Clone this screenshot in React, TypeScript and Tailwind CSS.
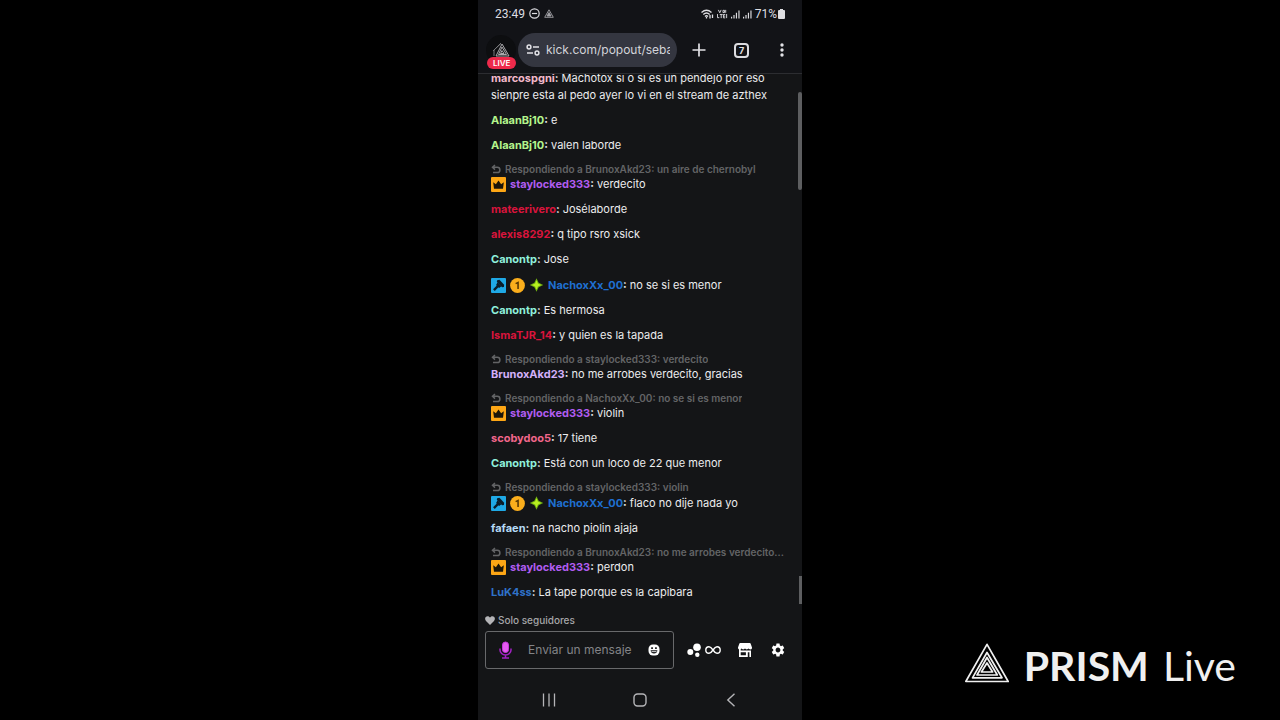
import type { ReactNode } from "react";
import { MdSettings } from "react-icons/md";

type Badge = "crown" | "mod" | "rank" | "spark";

interface ChatMessage {
  user: string;
  color: string;
  text: string;
  replyTo?: string;
  badges?: Badge[];
}

const messages: ChatMessage[] = [
  { user: "marcospgni", color: "text-[#f3b9cb]", text: "Machotox si o si es un pendejo por eso sienpre esta al pedo ayer lo vi en el stream de azthex" },
  { user: "AlaanBj10", color: "text-[#b4f58c]", text: "e" },
  { user: "AlaanBj10", color: "text-[#b4f58c]", text: "valen laborde" },
  { user: "staylocked333", color: "text-[#b05cf0]", text: "verdecito", replyTo: "BrunoxAkd23: un aire de chernobyl", badges: ["crown"] },
  { user: "mateerivero", color: "text-[#d8143c]", text: "Josélaborde" },
  { user: "alexis8292", color: "text-[#d8143c]", text: "q tipo rsro xsick" },
  { user: "Canontp", color: "text-[#8ff0dc]", text: "Jose" },
  { user: "NachoxXx_00", color: "text-[#1f6fd0]", text: "no se si es menor", badges: ["mod", "rank", "spark"] },
  { user: "Canontp", color: "text-[#8ff0dc]", text: "Es hermosa" },
  { user: "IsmaTJR_14", color: "text-[#d8143c]", text: "y quien es la tapada" },
  { user: "BrunoxAkd23", color: "text-[#d3b0fa]", text: "no me arrobes verdecito, gracias", replyTo: "staylocked333: verdecito" },
  { user: "staylocked333", color: "text-[#b05cf0]", text: "violin", replyTo: "NachoxXx_00: no se si es menor", badges: ["crown"] },
  { user: "scobydoo5", color: "text-[#f2668b]", text: "17 tiene" },
  { user: "Canontp", color: "text-[#8ff0dc]", text: "Está con un loco de 22 que menor" },
  { user: "NachoxXx_00", color: "text-[#1f6fd0]", text: "flaco no dije nada yo", replyTo: "staylocked333: violin", badges: ["mod", "rank", "spark"] },
  { user: "fafaen", color: "text-[#b5daf6]", text: "na nacho piolin ajaja" },
  { user: "staylocked333", color: "text-[#b05cf0]", text: "perdon", replyTo: "BrunoxAkd23: no me arrobes verdecito...", badges: ["crown"] },
  { user: "LuK4ss", color: "text-[#2f72c9]", text: "La tape porque es la capibara" },
];

function PrismMark({ className }: { className: string }) {
  return (
    <svg viewBox="0 0 44 40" className={className} fill="none" stroke="currentColor" strokeWidth="1.7" strokeLinejoin="round" aria-hidden="true">
      <path d="M22 1.3 43.2 38.500H.8Z" />
      <path d="M22 9.500 37 34.800H7.500Z" />
      <path d="M22 14.500 32.300 32 12 32Z" />
      <path d="M22 20 27.600 29H16.400Z" />
    </svg>
  );
}

function CrownBadge() {
  return (
    <svg viewBox="0 0 16 16" className="size-[15px] shrink-0" aria-hidden="true">
      <rect width="16" height="16" rx="1" fill="#fda615" />
      <path d="M2.300 5.600 5.200 7.600 8 3.600l2.800 4 2.900-2-.9 6.900H3.200Z" fill="#1c1508" />
    </svg>
  );
}

function ModBadge() {
  return (
    <svg viewBox="0 0 16 16" className="size-[15px] shrink-0" aria-hidden="true">
      <rect width="16" height="16" rx="1" fill="#1fa9e6" />
      <g fill="#0b1d29">
        <path d="M6.500 2.300 9 1.800l5 5.400-.2 2.300-2 .3-5.600-5.800Z" />
        <path d="M7 4.500 11.200 8.800 8.600 10.600 5.400 7.400Z" />
        <path d="M7 7.300 8.700 9 4 13.800 2.200 12Z" />
      </g>
    </svg>
  );
}

function RankBadge() {
  return (
    <svg viewBox="0 0 16 16" className="size-[15px] shrink-0" aria-hidden="true">
      <circle cx="8" cy="8" r="7.900" fill="#fbae1c" />
      <path d="M6 6 8.600 4.800V11.800" fill="none" stroke="#5b3a05" strokeWidth="1.700" />
    </svg>
  );
}

function SparkBadge() {
  return (
    <svg viewBox="0 0 16 16" className="h-[18px] w-[15px] shrink-0" aria-hidden="true">
      <path d="M8 .8 10.300 5.700 15.200 8 10.300 10.300 8 15.200 5.700 10.300.8 8 5.700 5.700Z" fill="#6fae12" />
      <path d="M8 3 9.500 6.500 13 8 9.500 9.500 8 13 6.500 9.500 3 8 6.500 6.500Z" fill="#b9f020" />
    </svg>
  );
}

const badgeIcons: Record<Badge, () => ReactNode> = {
  crown: CrownBadge,
  mod: ModBadge,
  rank: RankBadge,
  spark: SparkBadge,
};

function ReplyIcon() {
  return (
    <svg viewBox="0 0 10 10" className="size-[10px] shrink-0" fill="none" stroke="currentColor" strokeWidth="1.500" aria-hidden="true">
      <path d="M4 1 1.500 3.300 4 5.600M1.700 3.300H6.300A2.400 2.400 0 0 1 6.300 8.500H2" />
    </svg>
  );
}

function Message({ message }: { message: ChatMessage }) {
  return (
    <li>
      {message.replyTo && (
        <p className="flex h-[14px] items-center gap-1 text-[10px] leading-[14px] font-semibold text-[#636466]">
          <ReplyIcon />
          <span className="truncate">Respondiendo a {message.replyTo}</span>
        </p>
      )}
      <div className="flex items-center gap-1">
        {message.badges?.map((badge) => {
          const Icon = badgeIcons[badge];
          return <Icon key={badge} />;
        })}
        <p className="text-[11px] leading-[17px] text-[#ececee]">
          <span className={`font-bold ${message.color}`}>{message.user}</span>
          <span className="font-bold">:</span> {message.text}
        </p>
      </div>
    </li>
  );
}

function Signal() {
  return (
    <svg viewBox="0 0 10 10" className="h-[10px] w-[9px]" fill="currentColor" aria-hidden="true">
      <path d="M0 8h1.300v2H0ZM2.700 6H4v4H2.700ZM5.400 3.500h1.300V10H5.400ZM8.200 1h1.300v9H8.200Z" />
    </svg>
  );
}

function StatusBar() {
  return (
    <div className="flex h-[27px] items-center justify-between pr-[17px] pl-[17px] text-[12px] text-[#dedee2]">
      <div className="flex items-center gap-1">
        <time>23:49</time>
        <svg viewBox="0 0 12 12" className="size-[11px]" fill="none" stroke="currentColor" strokeWidth="1.300" aria-hidden="true">
          <circle cx="6" cy="6" r="5.100" />
          <path d="M3.200 6h5.600" />
        </svg>
        <svg viewBox="0 0 10 9" className="h-[9px] w-[10px] text-[#a4a4a8]" fill="none" stroke="currentColor" strokeWidth=".9" aria-hidden="true">
          <path d="M5 .8 9.300 8.300H.7Z" />
          <path d="M5 3.500 7 7H3Z" fill="currentColor" />
        </svg>
      </div>
      <div className="flex items-center gap-[3px]">
        <svg viewBox="0 0 13 10" className="h-[10px] w-[13px]" fill="none" stroke="currentColor" strokeWidth="1.300" aria-hidden="true">
          <path d="M.5 3.500Q5.500-1 10.500 3.500M2.300 5.500Q5.500 2.500 8.700 5.500M4 7.400Q5.500 6 7 7.400" />
          <path d="M5.500 8v1.500M9 6v3.500M11.500 5.500V9" />
        </svg>
        <svg viewBox="0 0 12 10" className="h-[10px] w-[11px]" fill="none" stroke="currentColor" strokeWidth="1" aria-hidden="true">
          <path d="M1.500.5 3 3.700 4.500.5M6.500 1h1.700v2.400H6.500ZM9.500.5v3.200M.5 5v4h2M3 5.500h3.200M4.600 5.500V9.500M9 5.500H7V9.200H9M7 7.300h2M10.500 5v4.500" />
        </svg>
        <Signal />
        <Signal />
        <span className="flex items-center gap-px">
          71%
          <svg viewBox="0 0 7 10" className="h-[10px] w-[7px]" fill="currentColor" aria-hidden="true">
            <path d="M2 0h3v1h1a1 1 0 0 1 1 1v7a1 1 0 0 1-1 1H1a1 1 0 0 1-1-1V2a1 1 0 0 1 1-1h1Z" />
          </svg>
        </span>
      </div>
    </div>
  );
}

function BrowserBar() {
  return (
    <div className="flex h-[47px] items-center border-b border-[#2c2d31] pr-[2px] pl-2 text-[#e2e2e6]">
      <button type="button" aria-label="LIVE" className="relative flex size-[30px] items-center justify-center rounded-full bg-[#0d0e10]">
        <svg viewBox="0 0 18 16" className="h-4 w-[18px] text-[#aaa9ac]" fill="none" stroke="currentColor" strokeWidth="1" aria-hidden="true">
          <path d="M2 14V8L9 1.500" stroke="#77777a" />
          <path d="M1 9 9 1" stroke="#77777a" />
          <path d="M10 2 17 14H4Z" />
          <path d="M10 5 14.500 12.500H6.500Z" />
          <path d="M10 8.500 12 11.500H8.500Z" />
        </svg>
        <span className="absolute top-[22px] left-px rounded-full bg-[#ee2a4b] px-[6px] text-[8px] leading-3 font-semibold text-white">LIVE</span>
      </button>
      <label className="ml-[2px] flex h-[34px] min-w-0 flex-1 items-center gap-[6px] rounded-full bg-[#343640] pr-[7px] pl-2">
        <svg viewBox="0 0 14 12" className="h-3 w-[14px] shrink-0" fill="none" stroke="currentColor" strokeWidth="1.500" aria-hidden="true">
          <circle cx="3" cy="3" r="1.900" />
          <path d="M7 3h6M1 9h6" />
          <circle cx="11" cy="9" r="1.900" />
        </svg>
        <input aria-label="URL" readOnly value="kick.com/popout/sebas" className="w-full min-w-0 bg-transparent text-[12px] text-[#d3d4da] outline-none" />
      </label>
      <button type="button" aria-label="+" className="flex h-8 w-[43px] items-center justify-center">
        <svg viewBox="0 0 14 14" className="size-[14px]" stroke="currentColor" strokeWidth="1.700" aria-hidden="true">
          <path d="M7 .5v13M.5 7h13" />
        </svg>
      </button>
      <button type="button" className="flex h-8 w-[43px] items-center justify-center">
        <span className="flex size-[15px] items-center justify-center rounded-[4px] border-2 border-[#dcdce0] text-[9px] leading-none font-bold">7</span>
      </button>
      <button type="button" aria-label="Menu" className="flex h-8 w-[37px] items-center justify-center">
        <svg viewBox="0 0 4 14" className="h-[14px] w-1" fill="currentColor" aria-hidden="true">
          <circle cx="2" cy="2" r="1.700" />
          <circle cx="2" cy="7" r="1.700" />
          <circle cx="2" cy="12" r="1.700" />
        </svg>
      </button>
    </div>
  );
}

function Composer() {
  return (
    <form className="px-[7px] pb-[11px]">
      <p className="flex h-4 items-center gap-[3px] text-[10px] font-medium text-[#a6a6a9]">
        <svg viewBox="0 0 10 9" className="h-[9px] w-[10px]" fill="#b4b4b7" aria-hidden="true">
          <path d="M5 9 1 5C-.8 2.800.3.300 2.600.2 3.800.2 4.600.9 5 1.600 5.400.9 6.200.2 7.400.2 9.700.3 10.800 2.800 9 5Z" />
        </svg>
        Solo seguidores
      </p>
      <div className="mt-[3px] flex items-center">
        <div className="flex h-[38px] min-w-0 flex-1 items-center rounded-[3px] border border-[#68696b] px-[13px]">
          <button type="button" aria-label="Mic" className="shrink-0">
            <svg viewBox="0 0 13 18" className="h-[18px] w-[13px]" fill="none" stroke="#a321c4" strokeWidth="1.500" aria-hidden="true">
              <rect x="3.500" y="1" width="6" height="10.500" rx="3" fill="#e65bf2" stroke="#c737dc" strokeWidth="1" />
              <path d="M1 7.500v1.500a5.500 5 0 0 0 11 0V7.500M6.500 14v2.500M3 17h7" />
            </svg>
          </button>
          <input type="text" aria-label="Enviar un mensaje" placeholder="Enviar un mensaje" className="ml-4 w-full min-w-0 bg-transparent text-[12px] text-white outline-none placeholder:text-[#838487]" />
          <button type="button" aria-label="Emoji" className="shrink-0">
            <svg viewBox="0 0 12 12" className="size-3" aria-hidden="true">
              <rect x=".5" y=".5" width="11" height="11" rx="4.500" fill="#fff" />
              <path d="M3.200 3.300h1.700v1.600H3.200ZM7.100 3.300h1.700v1.600H7.100ZM2.600 6.300h6.800Q9 9.600 6 9.600T2.600 6.300Z" fill="#141517" />
              <path d="M3.500 7.600h5" stroke="#fff" strokeWidth=".8" />
            </svg>
          </button>
        </div>
        <div className="ml-[13px] flex items-center text-white">
          <button type="button" aria-label="Points" className="flex items-center gap-[3px]">
            <svg viewBox="0 0 15 14" className="h-[14px] w-[15px]" fill="currentColor" aria-hidden="true">
              <circle cx="3.300" cy="9" r="3" />
              <circle cx="10" cy="4.200" r="3.800" />
              <circle cx="10.300" cy="11.700" r="2.200" />
            </svg>
            <svg viewBox="0 0 16 10" className="h-[10px] w-4" fill="none" stroke="currentColor" strokeWidth="1.400" aria-hidden="true">
              <path d="M8 5C6.700 3 5.700 1.700 4 1.700a3.200 3.300 0 0 0 0 6.600C5.700 8.300 6.700 7 8 5S10.300 1.700 12 1.700a3.200 3.300 0 0 1 0 6.600C10.300 8.300 9.300 7 8 5Z" />
            </svg>
          </button>
          <button type="button" aria-label="Store" className="ml-[17px]">
            <svg viewBox="0 0 14 14" className="size-[14px]" fill="currentColor" aria-hidden="true">
              <path d="M2.200 0h9.600q.6 0 .8.600L14 4.600v.6Q13.600 6.400 12.200 6.400 11 6.400 10.500 5.600 10 6.400 8.800 6.400 7.600 6.400 7 5.600 6.400 6.400 5.200 6.400 4 6.400 3.500 5.600 3 6.400 1.800 6.400.4 6.400 0 5.200V4.600L1.400.6Q1.600 0 2.200 0Z" />
              <path d="M1 6h1.700v1.600H13V14h-1.600V9.300h-1.600V14H1ZM2.700 9.200v3.100h5.200V9.200Z" fillRule="evenodd" />
            </svg>
          </button>
          <button type="button" aria-label="Settings" className="mr-[9px] ml-[18px]">
            <MdSettings className="size-4" />
          </button>
        </div>
      </div>
    </form>
  );
}

function NavigationBar() {
  return (
    <nav className="flex h-10 items-center justify-around px-[25px] text-[#b5b5b8]">
      <button type="button" aria-label="Recents">
        <svg viewBox="0 0 14 14" className="size-[14px]" stroke="currentColor" strokeWidth="1.300" aria-hidden="true">
          <path d="M1.500.5v13M7 .5v13M12.500.5v13" />
        </svg>
      </button>
      <button type="button" aria-label="Home">
        <svg viewBox="0 0 14 14" className="size-[14px]" fill="none" stroke="currentColor" strokeWidth="1.400" aria-hidden="true">
          <rect x="1" y="1" width="12" height="12" rx="3.500" />
        </svg>
      </button>
      <button type="button" aria-label="Back">
        <svg viewBox="0 0 14 14" className="size-[14px]" fill="none" stroke="currentColor" strokeWidth="1.400" aria-hidden="true">
          <path d="M10.500.7 3.800 7l6.700 6.300" />
        </svg>
      </button>
    </nav>
  );
}

export default function App() {
  return (
    <div className="grid min-h-screen grid-cols-[1fr_324px_1fr] bg-black font-['Inter',sans-serif]">
      <main className="col-start-2 flex h-screen flex-col bg-[#141517]">
        <header className="bg-[#121317]">
          <div className="font-['Roboto',sans-serif]">
            <StatusBar />
          </div>
          <BrowserBar />
        </header>
        <section className="relative flex min-h-0 flex-1 flex-col justify-end overflow-hidden pr-4 pb-[11px] pl-[13px]">
          <ul className="flex flex-col gap-2">
            {messages.map((message, index) => (
              <Message key={index} message={message} />
            ))}
          </ul>
          <div className="absolute top-[18px] right-0 h-[98px] w-1 rounded-full bg-[#5d5e60]" />
          <div className="absolute right-0 bottom-2 h-7 w-[3px] bg-[#5d5e60]" />
        </section>
        <Composer />
        <NavigationBar />
      </main>
      <aside className="flex items-end justify-end pr-11 pb-[31px] font-['Lato',sans-serif] text-[#f0f0f0]">
        <div className="flex items-start gap-[15px]">
          <PrismMark className="h-10 w-11" />
          <p className="flex gap-[14px] text-[41px] leading-[46px]">
            <span className="font-bold">PRISM</span>
            <span>Live</span>
          </p>
        </div>
      </aside>
    </div>
  );
}
